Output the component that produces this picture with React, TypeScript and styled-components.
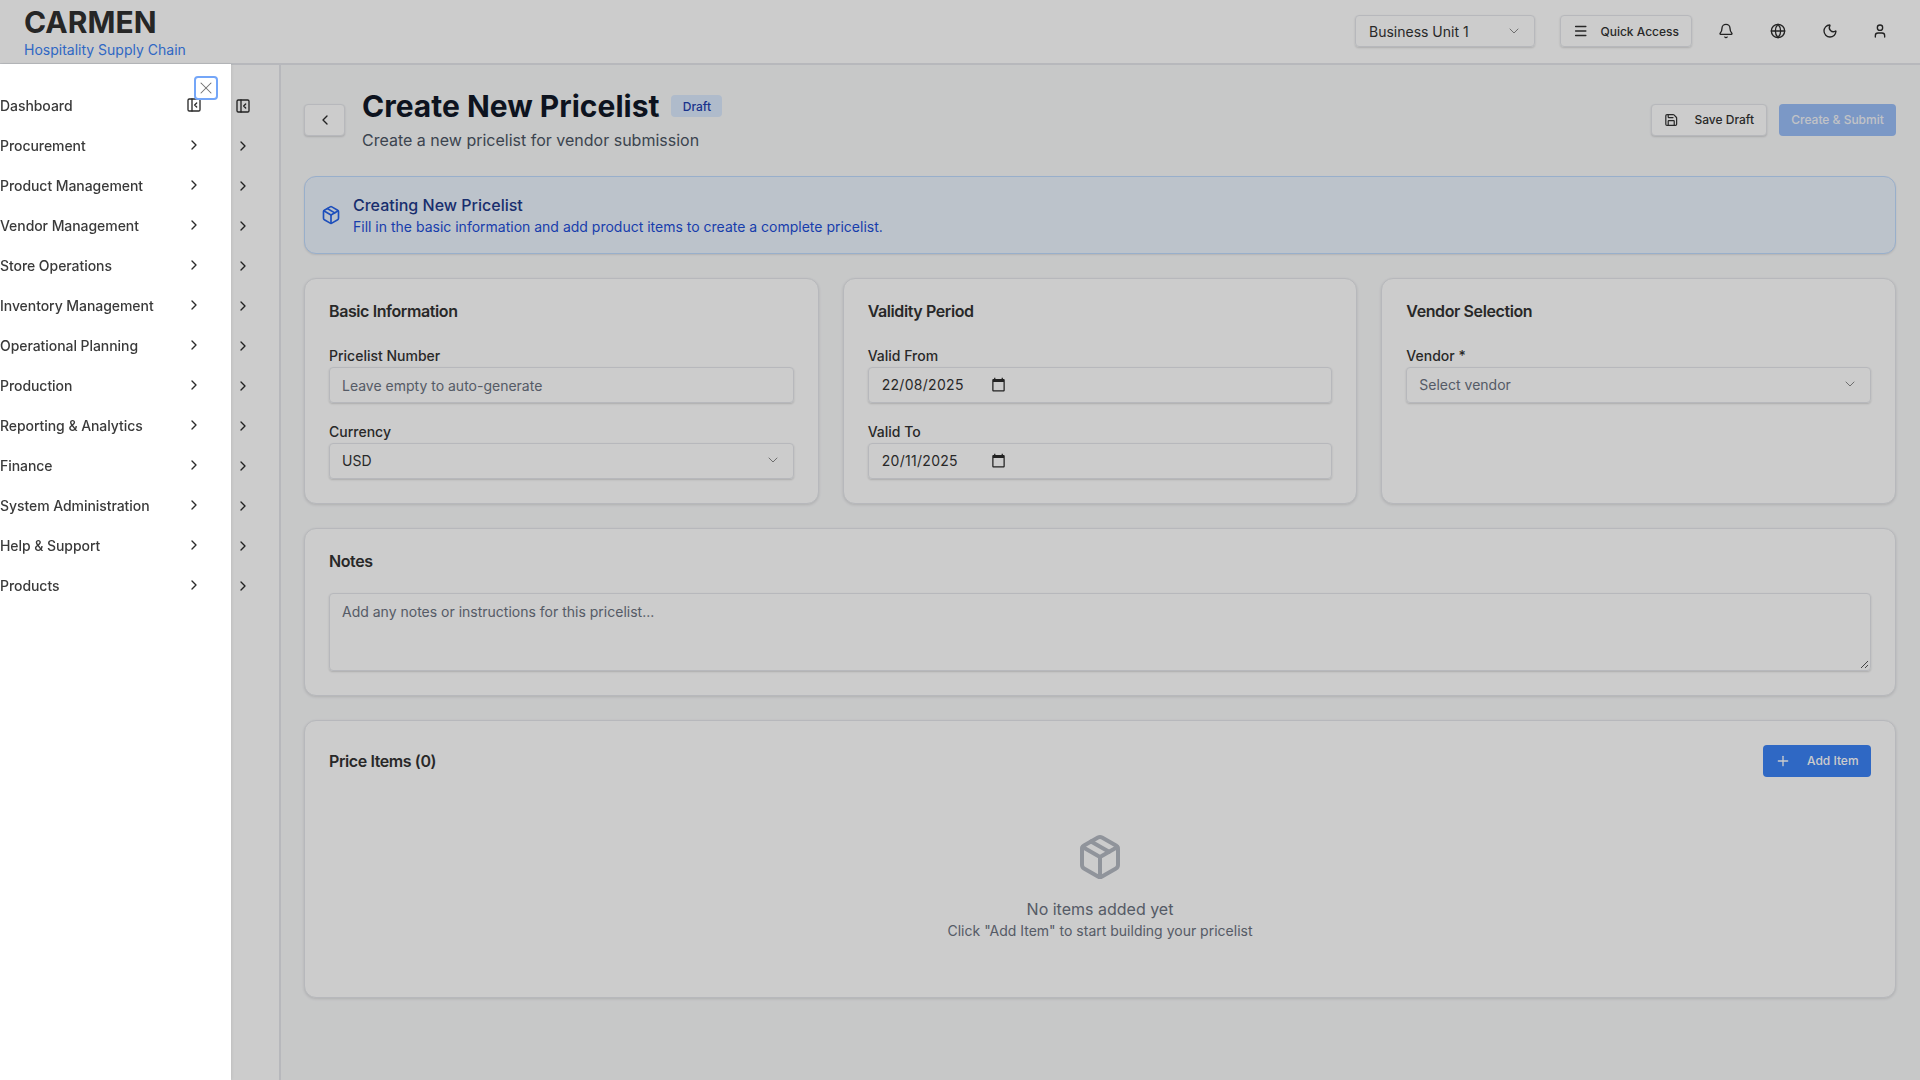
import React from "react";
import styled, { createGlobalStyle } from "styled-components";
import {
  Bell,
  ChevronDown,
  ChevronLeft,
  ChevronRight,
  Globe,
  Menu,
  Moon,
  Package,
  PanelLeftClose,
  Plus,
  Save,
  User,
  X,
} from "lucide-react";

const GlobalStyle = createGlobalStyle`
  * { box-sizing: border-box; }
  html, body { margin: 0; padding: 0; height: 100%; overflow: hidden; }
  body {
    font-family: Inter, "Noto Sans", sans-serif;
    color: #09090b;
    background: #f9fafb;
  }
`;

const Page = styled.div`
  width: 1920px;
  height: 1080px;
  display: flex;
  flex-direction: column;
`;

const Header = styled.header`
  height: 65px;
  flex: none;
  background: #fff;
  border-bottom: 2px solid #e5e7eb;
  display: flex;
  align-items: center;
  justify-content: space-between;
  padding: 0 22px 1px 24px;
`;

const Brand = styled.div`
  display: flex;
  flex-direction: column;
`;

const BrandName = styled.div`
  font-size: 30px;
  line-height: 36px;
  font-weight: 700;
  color: #303030;
  margin-top: 2px;
`;

const BrandTagline = styled.div`
  font-size: 14px;
  line-height: 20px;
  color: #3b82f6;
`;

const HeaderActions = styled.div`
  display: flex;
  align-items: center;
`;

const UnitSelect = styled.div`
  width: 180px;
  height: 32px;
  border: 1px solid #e5e7eb;
  border-radius: 4px;
  box-shadow: 0 1px 2px rgba(0, 0, 0, 0.15);
  display: flex;
  align-items: center;
  justify-content: space-between;
  padding: 0 12px 0 13px;
  font-size: 14px;
  color: #333;
  svg { color: #8a8a8a; }
`;

const QuickButton = styled.button`
  width: 132px;
  height: 32px;
  margin-left: 25px;
  background: transparent;
  border: 1px solid #e5e7eb;
  border-radius: 4px;
  box-shadow: 0 1px 2px rgba(0, 0, 0, 0.15);
  display: flex;
  align-items: center;
  gap: 12px;
  padding: 0 12px;
  font: 500 12px Inter, sans-serif;
  white-space: nowrap;
  color: #333;
`;

const IconButtons = styled.div`
  display: flex;
  align-items: center;
  gap: 16px;
  margin-left: 16px;
`;

const IconButton = styled.button`
  width: 36px;
  height: 36px;
  background: transparent;
  border: none;
  padding: 0;
  display: flex;
  align-items: center;
  justify-content: center;
  color: #2b2b2b;
  &:last-child { margin-left: -2px; }
`;

const Body = styled.div`
  flex: 1;
  display: flex;
  min-height: 0;
`;

const Rail = styled.aside`
  width: 281px;
  flex: none;
  background: #fff;
  border-right: 2px solid #e5e7eb;
  padding: 21px 28px 0 0;
  display: flex;
  flex-direction: column;
  align-items: flex-end;
`;

const RailIcon = styled.div`
  height: 40px;
  width: 16px;
  display: flex;
  align-items: center;
  justify-content: center;
  color: #2b2b2b;
`;

const Main = styled.main`
  flex: 1;
  min-width: 0;
  padding: 23px 24px 0 23px;
  display: flex;
  flex-direction: column;
`;

const TitleRow = styled.div`
  display: flex;
  align-items: center;
  justify-content: space-between;
  margin-bottom: 24px;
`;

const TitleLeft = styled.div`
  display: flex;
  align-items: center;
  gap: 17px;
`;

const BackButton = styled.button`
  width: 41px;
  height: 32px;
  background: #fff;
  border: 1px solid #e5e7eb;
  border-radius: 4px;
  box-shadow: 0 1px 2px rgba(0, 0, 0, 0.15);
  display: flex;
  align-items: center;
  justify-content: center;
  padding: 0;
  color: #2b2b2b;
`;

const TitleLine = styled.div`
  display: flex;
  align-items: center;
  gap: 12px;
`;

const Title = styled.h1`
  margin: 0;
  font-size: 30px;
  line-height: 36px;
  font-weight: 700;
  color: #111827;
`;

const DraftBadge = styled.span`
  height: 22px;
  width: 51px;
  display: inline-flex;
  align-items: center;
  justify-content: center;
  border-radius: 4px;
  background: #dbeafe;
  color: #1e40af;
  font-size: 12px;
  font-weight: 500;
`;

const Subtitle = styled.p`
  margin: 4px 0 0;
  font-size: 16px;
  line-height: 24px;
  color: #4b5563;
`;

const TitleActions = styled.div`
  display: flex;
  align-items: center;
  gap: 12px;
`;

const SaveButton = styled.button`
  width: 116px;
  height: 32px;
  background: #fff;
  border: 1px solid #e5e7eb;
  border-radius: 4px;
  box-shadow: 0 1px 2px rgba(0, 0, 0, 0.15);
  display: flex;
  align-items: center;
  gap: 16px;
  padding: 0 12px 1px;
  font: 500 12px Inter, sans-serif;
  white-space: nowrap;
  color: #333;
`;

const SubmitButton = styled.button`
  width: 117px;
  height: 32px;
  background: #9abef8;
  border: none;
  border-radius: 4px;
  display: flex;
  align-items: center;
  justify-content: center;
  padding: 0 0 1px;
  font: 500 12px Inter, sans-serif;
  white-space: nowrap;
  color: #f2f4f8;
`;

const InfoBox = styled.div`
  height: 78px;
  border: 1px solid #bfdbfe;
  border-radius: 12px;
  background: #ecf4fe;
  box-shadow: 0 1px 2px rgba(0, 0, 0, 0.1);
  padding: 16px;
  display: flex;
  align-items: center;
  gap: 12px;
  margin-bottom: 24px;
  svg { color: #2563eb; flex: none; }
`;

const InfoTitle = styled.div`
  font-size: 16px;
  line-height: 24px;
  font-weight: 500;
  color: #1e3a8a;
`;

const InfoText = styled.div`
  font-size: 14px;
  line-height: 20px;
  color: #1d4ed8;
`;

const CardGrid = styled.div`
  display: grid;
  grid-template-columns: repeat(3, 1fr);
  gap: 24px;
  margin-bottom: 24px;
`;

const Card = styled.section`
  background: #fff;
  border: 1px solid #e5e7eb;
  border-radius: 12px;
  box-shadow: 0 1px 3px rgba(0, 0, 0, 0.12);
  padding: 24px;
`;

const NotesCard = styled(Card)`
  margin-bottom: 24px;
`;

const CardTitle = styled.h2`
  margin: 0 0 27px;
  font-size: 16px;
  line-height: 16px;
  font-weight: 600;
  letter-spacing: -0.4px;
  color: #333;
`;

const NotesTitle = styled(CardTitle)`
  margin-bottom: 24px;
`;

const Field = styled.div`
  & + & { margin-top: 19px; }
`;

const Label = styled.label`
  display: block;
  font-size: 14px;
  line-height: 20px;
  font-weight: 500;
  color: #333;
  margin-bottom: 1px;
`;

const FieldBox = styled.div<{ $muted?: boolean }>`
  height: 36px;
  border: 1px solid #e5e7eb;
  border-radius: 4px;
  box-shadow: 0 1px 2px rgba(0, 0, 0, 0.16);
  display: flex;
  align-items: center;
  justify-content: space-between;
  padding: 0 12px;
  font-size: 14px;
  color: ${(p) => (p.$muted ? "#6b7280" : "#333")};
  svg { color: #8a8a8a; }
`;

const SelectBox = styled(FieldBox)`
  padding-bottom: 2px;
`;

const DateBox = styled(SelectBox)`
  justify-content: flex-start;
  padding-left: 13px;
  letter-spacing: 0.3px;
  svg { color: #2b2b2b; }
`;

const DateValue = styled.span`
  width: 109px;
`;

const NotesArea = styled.div`
  position: relative;
  height: 78px;
  border: 1px solid #e5e7eb;
  border-radius: 4px;
  box-shadow: 0 1px 2px rgba(0, 0, 0, 0.16);
  padding: 8px 12px;
  font-size: 14px;
  line-height: 20px;
  color: #6b7280;
`;

const ResizeGrip = styled.svg`
  position: absolute;
  right: 1px;
  bottom: 1px;
  width: 10px;
  height: 10px;
  color: #555;
`;

const ItemsHead = styled.div`
  display: flex;
  align-items: center;
  justify-content: space-between;
`;

const ItemsTitle = styled(CardTitle)`
  margin: 0;
`;

const AddButton = styled.button`
  width: 108px;
  height: 32px;
  background: #3b82f6;
  border: none;
  border-radius: 4px;
  display: flex;
  align-items: center;
  gap: 16px;
  padding: 0 12px 1px;
  font: 500 12px Inter, sans-serif;
  white-space: nowrap;
  color: #fff;
`;

const EmptyState = styled.div`
  display: flex;
  flex-direction: column;
  align-items: center;
  padding: 56px 0 32px;
  svg { color: #b5b9c2; }
`;

const EmptyTitle = styled.div`
  margin-top: 16px;
  font-size: 16px;
  line-height: 24px;
  color: #6b7280;
`;

const EmptyText = styled.div`
  font-size: 14px;
  line-height: 20px;
  color: #6b7280;
`;

const Scrim = styled.div`
  position: fixed;
  inset: 0;
  background: rgba(0, 0, 0, 0.2);
`;

const Sheet = styled.nav`
  position: fixed;
  left: 0;
  top: 64px;
  bottom: 0;
  width: 231px;
  background: #fff;
  padding-top: 21px;
  box-shadow: 1px 0 3px rgba(0, 0, 0, 0.08);
`;

const CloseButton = styled.button`
  position: absolute;
  left: 194px;
  top: 12px;
  width: 24px;
  height: 24px;
  background: #fff;
  border: 2px solid #74a6f8;
  border-radius: 4px;
  padding: 0;
  display: flex;
  align-items: center;
  justify-content: center;
  color: #707070;
`;

const NavRow = styled.div`
  height: 40px;
  display: flex;
  align-items: center;
  justify-content: space-between;
  padding-right: 29px;
  font-size: 14px;
  font-weight: 500;
  letter-spacing: -0.06px;
  color: #3a3a3a;
  svg { color: #2b2b2b; flex: none; }
`;

const NAV = [
  "Dashboard",
  "Procurement",
  "Product Management",
  "Vendor Management",
  "Store Operations",
  "Inventory Management",
  "Operational Planning",
  "Production",
  "Reporting & Analytics",
  "Finance",
  "System Administration",
  "Help & Support",
  "Products",
];

function CalendarGlyph() {
  return (
    <svg width="15" height="15" viewBox="0 0 24 24" fill="currentColor">
      <path d="M20 3h-1V1h-2v2H7V1H5v2H4c-1.1 0-2 .9-2 2v16c0 1.1.9 2 2 2h16c1.1 0 2-.9 2-2V5c0-1.1-.9-2-2-2zm0 18H4V8h16v13z" />
    </svg>
  );
}

export default function App() {
  return (
    <Page>
      <GlobalStyle />
      <Header>
        <Brand>
          <BrandName>CARMEN</BrandName>
          <BrandTagline>Hospitality Supply Chain</BrandTagline>
        </Brand>
        <HeaderActions>
          <UnitSelect>
            Business Unit 1
            <ChevronDown size={16} strokeWidth={1.5} />
          </UnitSelect>
          <QuickButton>
            <Menu size={16} />
            Quick Access
          </QuickButton>
          <IconButtons>
            <IconButton><Bell size={16} /></IconButton>
            <IconButton><Globe size={16} /></IconButton>
            <IconButton><Moon size={16} /></IconButton>
            <IconButton><User size={16} /></IconButton>
          </IconButtons>
        </HeaderActions>
      </Header>
      <Body>
        <Rail>
          {NAV.map((name, i) => (
            <RailIcon key={name}>
              {i === 0 ? <PanelLeftClose size={16} /> : <ChevronRight size={16} />}
            </RailIcon>
          ))}
        </Rail>
        <Main>
          <TitleRow>
            <TitleLeft>
              <BackButton><ChevronLeft size={16} /></BackButton>
              <div>
                <TitleLine>
                  <Title>Create New Pricelist</Title>
                  <DraftBadge>Draft</DraftBadge>
                </TitleLine>
                <Subtitle>Create a new pricelist for vendor submission</Subtitle>
              </div>
            </TitleLeft>
            <TitleActions>
              <SaveButton>
                <Save size={16} />
                Save Draft
              </SaveButton>
              <SubmitButton>Create &amp; Submit</SubmitButton>
            </TitleActions>
          </TitleRow>

          <InfoBox>
            <Package size={20} />
            <div>
              <InfoTitle>Creating New Pricelist</InfoTitle>
              <InfoText>Fill in the basic information and add product items to create a complete pricelist.</InfoText>
            </div>
          </InfoBox>

          <CardGrid>
            <Card>
              <CardTitle>Basic Information</CardTitle>
              <Field>
                <Label>Pricelist Number</Label>
                <FieldBox $muted>Leave empty to auto-generate</FieldBox>
              </Field>
              <Field>
                <Label>Currency</Label>
                <SelectBox>
                  USD
                  <ChevronDown size={16} strokeWidth={1.5} />
                </SelectBox>
              </Field>
            </Card>
            <Card>
              <CardTitle>Validity Period</CardTitle>
              <Field>
                <Label>Valid From</Label>
                <DateBox>
                  <DateValue>22/08/2025</DateValue>
                  <CalendarGlyph />
                </DateBox>
              </Field>
              <Field>
                <Label>Valid To</Label>
                <DateBox>
                  <DateValue>20/11/2025</DateValue>
                  <CalendarGlyph />
                </DateBox>
              </Field>
            </Card>
            <Card>
              <CardTitle>Vendor Selection</CardTitle>
              <Field>
                <Label>Vendor *</Label>
                <SelectBox $muted>
                  Select vendor
                  <ChevronDown size={16} strokeWidth={1.5} />
                </SelectBox>
              </Field>
            </Card>
          </CardGrid>

          <NotesCard>
            <NotesTitle>Notes</NotesTitle>
            <NotesArea>
              Add any notes or instructions for this pricelist...
              <ResizeGrip viewBox="0 0 10 10">
                <path d="M9 2 2 9M9 6 6 9" stroke="currentColor" fill="none" />
              </ResizeGrip>
            </NotesArea>
          </NotesCard>

          <Card>
            <ItemsHead>
              <ItemsTitle>Price Items (0)</ItemsTitle>
              <AddButton>
                <Plus size={16} />
                Add Item
              </AddButton>
            </ItemsHead>
            <EmptyState>
              <Package size={48} />
              <EmptyTitle>No items added yet</EmptyTitle>
              <EmptyText>Click "Add Item" to start building your pricelist</EmptyText>
            </EmptyState>
          </Card>
        </Main>
      </Body>
      <Scrim />
      <Sheet>
        <CloseButton><X size={20} strokeWidth={1.25} /></CloseButton>
        {NAV.map((name, i) => (
          <NavRow key={name}>
            {name}
            {i === 0 ? <PanelLeftClose size={16} /> : <ChevronRight size={16} />}
          </NavRow>
        ))}
      </Sheet>
    </Page>
  );
}
